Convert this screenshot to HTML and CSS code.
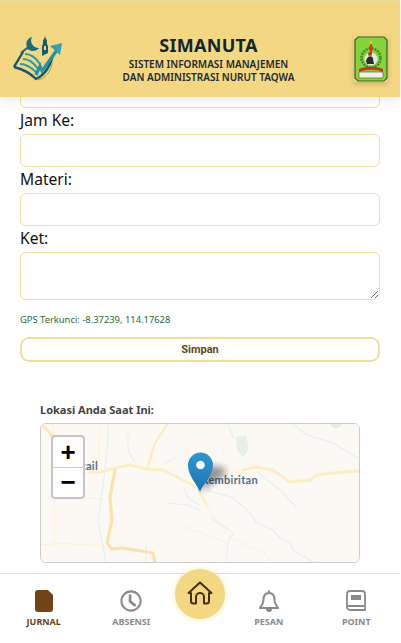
FILE: index.html
```html
<!DOCTYPE html>
<html lang="id">
<head>
<meta charset="utf-8">
<title>SIMANUTA</title>
<link rel="stylesheet" href="styles.css">
</head>
<body>
<div class="app">
  <header class="header">
    <svg class="logo-left" viewBox="0 0 50 48" width="50" height="48" aria-hidden="true">
      <path d="M1 32 L10 17 M1 32 C9 34 17 38 23 44 C32 40 38 30 40 20" fill="none" stroke="#17566b" stroke-width="2.400" stroke-linejoin="round"/>
      <path d="M7 29 C13 29 19 33 24 38 M10 24 C15 24 21 28 25 34 M12 19 C18 19 23 23 27 29" fill="none" stroke="#2b98a8" stroke-width="1.800"/>
      <path d="M13 22 C18 22 22 26 25 31" fill="none" stroke="#d9dfa6" stroke-width="1.200"/>
      <path d="M23 40 L27 31 L29 36 L44 15" fill="none" stroke="#2391a8" stroke-width="3.200" stroke-linejoin="miter"/>
      <path d="M37 11 L49 8 L47 20 Z" fill="#2aa3b6"/>
      <path d="M8 18 L14 13 L20 15" fill="none" stroke="#1b6478" stroke-width="2"/>
      <path d="M19 2 A7 7 0 1 0 26 13 A7.500 7.500 0 0 1 19 2 Z" fill="#1c6a7c"/>
      <path d="M29 21 V11 L30 9 V6 C30 4 32 4 32 0 C32 4 34 4 34 6 V9 L35 11 V18 Z" fill="#17596e"/>
      <rect x="31" y="11" width="2" height="4" fill="#e6d69a"/>
      <path d="M25 45 C33 43 38 36 39 28" fill="none" stroke="#8ba25e" stroke-width="1"/>
    </svg>
    <div class="brand">
      <h1 class="brand-title">SIMANUTA</h1>
      <p class="brand-sub">SISTEM INFORMASI MANAJEMEN</p>
      <p class="brand-sub">DAN ADMINISTRASI NURUT TAQWA</p>
    </div>
    <svg class="logo-right" viewBox="0 0 34 46" width="34" height="46" aria-hidden="true">
      <path d="M4 1 H30 L33 4 V42 L30 45 H4 L1 42 V4 Z" fill="#86d43c" stroke="#3d5a30" stroke-width="1.200"/>
      <circle cx="17" cy="22" r="9.500" fill="none" stroke="#3e8a2c" stroke-width="2.600" stroke-dasharray="2 1"/>
      <circle cx="17" cy="23" r="6.500" fill="#e2e8e2"/>
      <path d="M17 6 L19 12 L17 19 L15 12 Z" fill="#d8341f"/>
      <path d="M17 4 L18.500 8 H15.500 Z" fill="#e8cb2c"/>
      <path d="M12 25 C13 19 19 19 19 23 L20 28 H13 Z" fill="#2d2d2d"/>
      <circle cx="16" cy="18" r="2" fill="#c9301c"/>
      <path d="M5 33 C12 30 22 30 29 33 L29 36 C22 33 12 33 5 36 Z" fill="#c8331e"/>
      <rect x="5" y="36" width="24" height="6" rx="1" fill="#f4f1df" stroke="#2f5a2a" stroke-width=".6"/>
    </svg>
  </header>

  <main class="main">
    <form class="form">
      <input class="field" type="text" aria-label="Kelas">
      <label class="label" for="jam">Jam Ke:</label>
      <input class="field" id="jam" type="text">
      <label class="label" for="materi">Materi:</label>
      <input class="field" id="materi" type="text">
      <label class="label" for="ket">Ket:</label>
      <textarea class="field area" id="ket"></textarea>
      <p class="gps">GPS Terkunci: -8.37239, 114.17628</p>
      <button class="save" type="button">Simpan</button>
    </form>

    <section class="loc">
      <h2 class="loc-title">Lokasi Anda Saat Ini:</h2>
      <div class="map">
        <svg class="map-art" viewBox="40 423 320 140" width="320" height="140" aria-hidden="true">
          <defs>
            <filter id="soft"><feGaussianBlur stdDeviation="3.500"/></filter>
            <linearGradient id="pin" x1="0" y1="0" x2="0" y2="1">
              <stop offset="0" stop-color="#2e97cf"/>
              <stop offset="1" stop-color="#1b74b4"/>
            </linearGradient>
          </defs>
          <rect x="40" y="423" width="320" height="140" fill="#fcf9f5"/>
          <path d="M236 437 l10 -2 l3 14 l-6 8 l-6 -6 Z" fill="#e7efe2"/>
          <path d="M330 424 h12 l-3 4 h-6 Z" fill="#e7efe2"/>
          <g fill="none" stroke="#fdf3dc" stroke-width="1.500">
            <path d="M40 545 C60 542 85 545 103 545"/>
            <path d="M53 424 L55 463 L54 545"/>
            <path d="M85 497 L106 500"/>
            <path d="M200 495 L207 508 L230 538 L263 552 L272 562"/>
            <path d="M228 543 L180 525"/>
            <path d="M100 423 L98 470"/>
          </g>
          <g fill="none" stroke="#e3eff1" stroke-width="1.200">
            <path d="M108 425 L108 440 L103 487 L98 520 L103 547 L106 562"/>
            <path d="M128 435 L128 450 L135 463"/>
            <path d="M164 463 L175 458"/>
            <path d="M168 503 L187 505 L200 510"/>
            <path d="M183 487 L190 500 L200 505"/>
            <path d="M207 490 L233 498 L247 510 L257 523 L273 530 L282 540 L290 542 L293 550 L313 562"/>
            <path d="M257 472 L280 490 L297 508"/>
            <path d="M293 425 L307 435 L333 443 L357 458"/>
            <path d="M228 425 L234 438"/>
            <path d="M210 517 L233 533 L228 543 L226 562"/>
            <path d="M146 545 V562"/>
          </g>
          <g fill="none" stroke-linecap="round" stroke-linejoin="round">
            <path d="M197 487 L215 478 L243 470" stroke="#fdf5e0" stroke-width="2"/>
            <path d="M197 487 L207 505" stroke="#fdf0d2" stroke-width="3"/>
            <path d="M90 472 L100 472 L115 468 L130 465 L147 469 L163 470 L183 480 L197 487" stroke="#fcedc4" stroke-width="3"/>
            <path d="M243 470 L257 467 L273 470 L290 482 L310 480 L317 475 L333 473 L358 471" stroke="#fcedc4" stroke-width="3"/>
            <path d="M115 470 L110 497 L112 520 L107 543 L112 549 L123 548 L153 553 L155 563" stroke="#fae3aa" stroke-width="3.200"/>
            <path d="M147 469 L155 443 L167 425" stroke="#fcedc4" stroke-width="2.500"/>
            <path d="M43 425 L53 437" stroke="#fce8b8" stroke-width="3"/>
          </g>
          <text class="map-place" x="98" y="470" text-anchor="end">tail</text>
          <text class="map-place" x="258" y="484" text-anchor="end">Kembiritan</text>
          <path d="M200 492 L226 474 C228 467 212 462 206 469 Z" fill="#000" opacity=".4" filter="url(#soft)"/>
          <path d="M200 492 C197 484 188 476 188 465 A12.500 12.500 0 0 1 213 465 C213 476 203 484 200 492 Z" fill="url(#pin)"/>
          <circle cx="200.500" cy="465" r="4.300" fill="#fff"/>
        </svg>
        <div class="zoom">
          <span class="zoom-btn">+</span>
          <span class="zoom-btn">&#8722;</span>
        </div>
      </div>
    </section>
  </main>

  <nav class="nav">
    <a class="nav-item nav-active">
      <svg viewBox="0 0 18 22" width="18" height="22" aria-hidden="true"><path d="M3 0 H13 L18 5 V19 A3 3 0 0 1 15 22 H3 A3 3 0 0 1 0 19 V3 A3 3 0 0 1 3 0 Z" fill="#6f4518"/></svg>
      <span>JURNAL</span>
    </a>
    <a class="nav-item">
      <svg viewBox="0 0 24 24" width="22" height="22" aria-hidden="true"><circle cx="12" cy="12" r="10.500" fill="none" stroke="#8a8a8a" stroke-width="2.200"/><path d="M11 6 V12.500 L16 16.500" fill="none" stroke="#8a8a8a" stroke-width="3" stroke-linecap="round"/></svg>
      <span>ABSENSI</span>
    </a>
    <div class="home">
      <svg viewBox="0 0 26 24" width="26" height="24" aria-hidden="true"><path d="M1.500 12 L13 1.500 L24.500 12 L22 12 V20 A2.500 2.500 0 0 1 19.500 22.500 H17 V16 A4 4 0 0 0 9 16 V22.500 H6.500 A2.500 2.500 0 0 1 4 20 V12 Z" fill="none" stroke="#47300f" stroke-width="2" stroke-linejoin="round"/></svg>
    </div>
    <a class="nav-item">
      <svg viewBox="0 0 22 22" width="22" height="22" aria-hidden="true"><path d="M11 0.500 V3 M11 3 C6.500 3 5.500 6.500 5.500 10 C5.500 14 3 16 2 18 H20 C19 16 16.500 14 16.500 10 C16.500 6.500 15.500 3 11 3 Z" fill="none" stroke="#8a8a8a" stroke-width="2" stroke-linejoin="round"/><path d="M8 19 A3 3 0 0 0 14 19 Z" fill="#8a8a8a"/></svg>
      <span>PESAN</span>
    </a>
    <a class="nav-item">
      <svg viewBox="0 0 20 22" width="20" height="22" aria-hidden="true"><path d="M4 1 H16 A3 3 0 0 1 19 4 V20 H4 A3 3 0 0 1 1 17 V4 A3 3 0 0 1 4 1 Z" fill="none" stroke="#8a8a8a" stroke-width="1.800"/><rect x="5" y="5" width="10" height="5" fill="#8a8a8a"/><path d="M1.500 16 H18" stroke="#8a8a8a" stroke-width="2"/></svg>
      <span>POINT</span>
    </a>
  </nav>
</div>
</body>
</html>
```
FILE: styles.css
```css
* { box-sizing: border-box; }
html, body { margin: 0; padding: 0; height: 100%; background: #fff; overflow: hidden; }
body { font-family: "Noto Sans", "Open Sans", sans-serif; color: #111; }
.app { position: relative; width: 401px; height: 643px; overflow: hidden; }

.header {
  position: absolute; z-index: 5; top: 0; left: 0; width: 400px; height: 97px;
  background: #f3d782; border-top: 2px solid #e6dba0;
  display: flex; align-items: center; justify-content: space-between;
  padding: 19px 12px 0 13px;
  box-shadow: 0 3px 10px rgba(0, 0, 0, .08);
}
.logo-left { width: 50px; height: 48px; filter: blur(.35px); }
.logo-right { width: 34px; height: 46px; filter: blur(.35px); box-shadow: 0 2px 5px rgba(0, 0, 0, .18); }
.brand { flex: 1; text-align: center; }
.brand-title { margin: 0 0 2px; font-size: 18px; line-height: 22px; font-weight: 700; letter-spacing: .3px; color: #10262e; }
.brand-sub { margin: 0; font-size: 10px; line-height: 13px; font-weight: 600; color: #1c2a2e; }

.main { width: 400px; padding: 75px 20px 0; }
.form { display: flex; flex-direction: column; }
.label { font-size: 15.600px; line-height: 24px; height: 26px; color: #111; }
.field {
  display: block; width: 100%; height: 33px; padding: 4px 8px;
  border: 1px solid #efdf9f; border-radius: 6px; background: #fff;
  font: inherit; outline: none;
}
.area { height: 48px; resize: vertical; }
.gps { margin: 13px 0 0; font-size: 9.400px; line-height: 13px; color: #1f6b35; }
.save {
  margin-top: 11px; height: 25px; width: 100%;
  border: 2px solid #f0de9a; border-radius: 9px; background: #fff;
  font-family: Roboto, sans-serif; font-size: 11px; font-weight: 700; color: #5f4526;
}

.loc { padding: 40px 20px 0; }
.loc-title { margin: 0 0 5px; font-size: 11px; line-height: 16px; font-weight: 700; color: #444; }
.map { position: relative; width: 320px; height: 140px; border: 1px solid #ccc; border-radius: 6px; overflow: hidden; background: #fcf9f5; }
.map-art { display: block; position: absolute; top: -1px; left: -1px; }
.map-place { font-family: Lato, "Open Sans", sans-serif; font-size: 11px; font-weight: 700; fill: #4f6c8c; letter-spacing: .3px; }
.zoom {
  position: absolute; top: 11px; left: 10px; width: 34px;
  border: 2px solid #c5c5c5; border-radius: 4px; background: #fff;
  display: flex; flex-direction: column;
}
.zoom-btn {
  height: 30px; display: flex; align-items: center; justify-content: center;
  font-family: "Liberation Sans", sans-serif; font-size: 26px; font-weight: 700; color: #000;
}
.zoom-btn + .zoom-btn { border-top: 1px solid #ccc; }

.nav {
  position: absolute; z-index: 6; left: 0; bottom: 0; width: 400px; height: 70px;
  background: #fff; border-top: 1px solid #ddd;
  display: grid; grid-template-columns: 1fr 1fr 50px 1fr 1fr;
}
.nav-item {
  display: flex; flex-direction: column; align-items: center; gap: 4px;
  padding-top: 16px; font-family: "Noto Sans", sans-serif; font-size: 9px; line-height: 12px; font-weight: 700; color: #8a8a8a;
}
.nav-active { color: #6b4210; }
.home {
  width: 50px; height: 50px; margin-top: -5px; border-radius: 50%;
  background: #f3d782; display: flex; align-items: center; justify-content: center;
  padding-bottom: 3px;
  box-shadow: 0 0 6px rgba(243, 215, 130, .6);
}
```
